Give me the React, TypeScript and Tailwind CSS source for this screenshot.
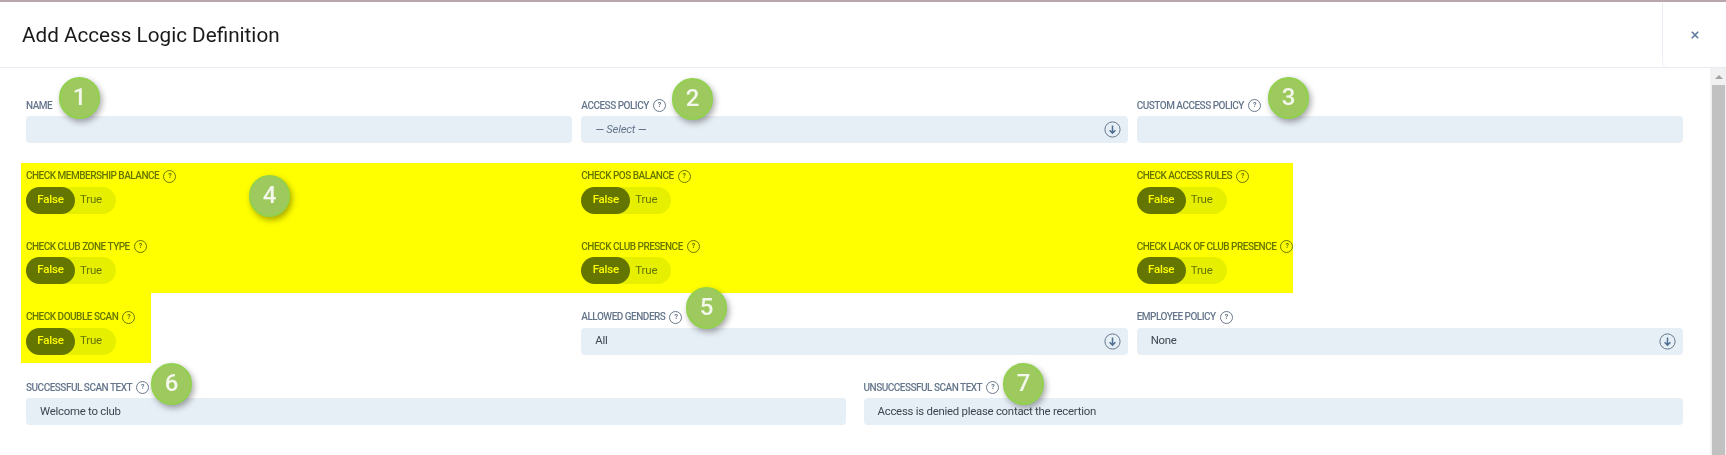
const Help = () => (
  <span className="inline-flex h-[13px] w-[13px] shrink-0 items-center justify-center rounded-full border border-[#6b7a8c] text-[7px] font-bold leading-none text-[#5f6f82]">
    ?
  </span>
);

const Label = ({ text, help = true }: { text: string; help?: boolean }) => (
  <div className="mb-[5px] flex h-[11px] items-center gap-[4px] whitespace-nowrap text-[10px] font-medium uppercase leading-none tracking-[-0.5px] text-[#64758b]">
    <span>{text}</span>
    {help && <Help />}
  </div>
);

const Arrow = () => (
  <svg viewBox="0 0 17 17" className="h-[17px] w-[17px]" fill="none">
    <circle cx="8.5" cy="8.5" r="7.6" stroke="#64758b" strokeWidth="1" />
    <path d="M8.5 4.5v7.5M5.6 9.2l2.9 2.9 2.9-2.9" stroke="#4f6f92" strokeWidth="1.5" />
  </svg>
);

const Input = ({ text }: { text?: string }) => (
  <div className="flex h-[27px] items-center rounded-[4px] bg-[#e7eff6] pl-[14px] text-[11.4px] tracking-[-0.25px] text-[#3d4650]">{text}</div>
);

const Field = ({ label, help = true, value }: { label: string; help?: boolean; value?: string }) => (
  <div>
    <Label text={label} help={help} />
    <Input text={value} />
  </div>
);

const Select = ({ label, value, placeholder }: { label: string; value: string; placeholder?: boolean }) => (
  <div>
    <Label text={label} />
    <div
      className={`flex h-[27px] items-center justify-between rounded-[4px] bg-[#e7eff6] pl-[14px] pr-[7px] text-[11.4px] tracking-[-0.25px] ${
        placeholder ? "italic text-[#64758b]" : "text-[#3d4650]"
      }`}
    >
      <span>{value}</span>
      <Arrow />
    </div>
  </div>
);

const Toggle = ({ label }: { label: string }) => (
  <div>
    <Label text={label} />
    <div className="flex h-[27px] w-[90px] items-center rounded-full bg-[#e7eff6] text-[11.5px] tracking-[-0.2px]">
      <span className="flex h-full w-[49px] items-center justify-center rounded-full bg-[#64759a] pb-[1px] font-medium text-white">
        False
      </span>
      <span className="ml-[5px] text-[#64758b]">True</span>
    </div>
  </div>
);

const Badge = ({ n, className }: { n: number; className: string }) => (
  <div
    className={`absolute z-20 flex h-[42px] w-[41px] items-center justify-center rounded-full border-2 border-[#93d04f] bg-[#9dc95f] pb-[3px] text-2xl font-medium text-[#f4f7ec] shadow-[2px_3px_6px_rgba(0,0,0,0.35)] ${className}`}
  >
    {n}
  </div>
);

export default function App() {
  return (
    <div className="relative h-[455px] w-[1726px] overflow-hidden border-t-2 border-[#b9a6ac] bg-white font-['Roboto',sans-serif]">
      <header className="flex h-[66px] items-stretch justify-between border-b border-[#e7edf3]">
        <h1 className="flex items-center pl-[22px] pt-[1px] text-[20.7px] leading-none text-[#1a1a1a]">Add Access Logic Definition</h1>
        <div className="mt-[1px] flex w-[64px] items-center justify-center rounded-bl-[6px] border-l border-[#e7edf3]">
          <svg viewBox="0 0 8 8" className="ml-[1px] h-[8px] w-[8px]" fill="none">
            <path d="M0.8 0.8l6.4 6.4M7.2 0.8L0.8 7.2" stroke="#5b7a99" strokeWidth="1.6" />
          </svg>
        </div>
      </header>

      <div className="flex h-[387px]">
        <main className="flex-1 pl-[26px] pr-[27px] pt-[32px]">
          <div className="grid grid-cols-3 gap-x-[9px] gap-y-[27.5px]">
            <Field label="Name" help={false} />
            <Select label="Access Policy" value="— Select —" placeholder />
            <Field label="Custom Access Policy" />
            <Toggle label="Check Membership Balance" />
            <Toggle label="Check POS Balance" />
            <Toggle label="Check Access Rules" />
            <Toggle label="Check Club Zone Type" />
            <Toggle label="Check Club Presence" />
            <Toggle label="Check Lack of Club Presence" />
            <Toggle label="Check Double Scan" />
            <Select label="Allowed Genders" value="All" />
            <Select label="Employee Policy" value="None" />
          </div>
          <div className="mt-[27.5px] grid grid-cols-2 gap-x-[18px]">
            <Field label="Successful Scan Text" value="Welcome to club" />
            <Field label="Unsuccessful Scan Text" value="Access is denied please contact the recertion" />
          </div>
        </main>
        <div className="flex w-[16px] flex-col items-center bg-[#f1f1f1] pl-[2px] pr-[1px]">
          <div className="flex h-[17px] items-center justify-center">
            <svg viewBox="0 0 8 4" className="h-[4px] w-[8px]">
              <path d="M4 0l4 4H0z" fill="#a3a3a3" />
            </svg>
          </div>
          <div className="w-full flex-1 bg-[#c1c1c1]" />
        </div>
      </div>

      {/* Highlighter marks laid over the form */}
      <div className="pointer-events-none absolute left-[21px] top-[161px] z-10 h-[130px] w-[1272px] bg-[#ffff00] mix-blend-multiply" />
      <div className="pointer-events-none absolute left-[21px] top-[291px] z-10 h-[70px] w-[130px] bg-[#ffff00] mix-blend-multiply" />

      <Badge n={1} className="left-[59px] top-[75px]" />
      <Badge n={2} className="left-[672px] top-[76px]" />
      <Badge n={3} className="left-[1268px] top-[75px]" />
      <Badge n={4} className="left-[249px] top-[173px]" />
      <Badge n={5} className="left-[686px] top-[285px]" />
      <Badge n={6} className="left-[151px] top-[361px]" />
      <Badge n={7} className="left-[1003px] top-[361px]" />
    </div>
  );
}
